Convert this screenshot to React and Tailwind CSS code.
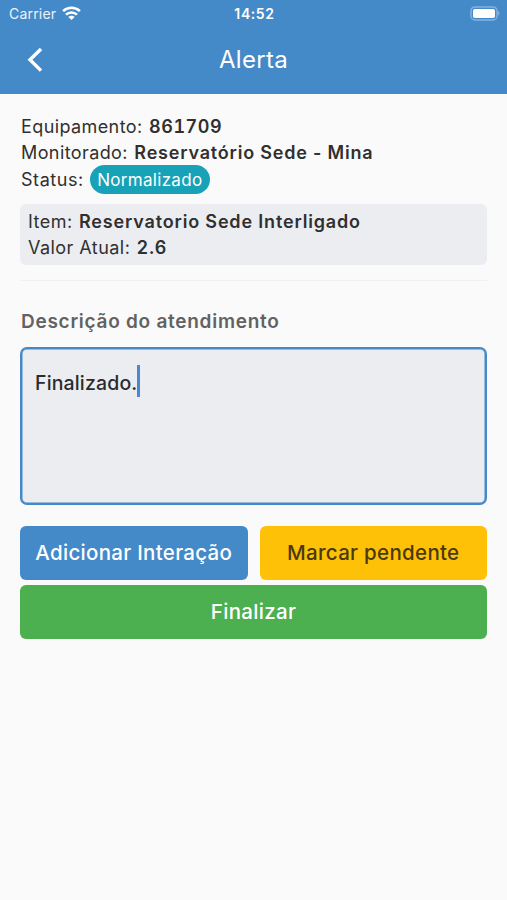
function BackIcon() {
  return (
    <svg width="18" height="26" viewBox="0 0 18 26" fill="none" stroke="white" strokeWidth="3.4">
      <path d="M15 2L4 12.8L15 23.6" />
    </svg>
  )
}

function WifiIcon() {
  return (
    <svg width="19" height="15" viewBox="0 0 19 15" fill="none" stroke="white" strokeWidth="2.6">
      <path d="M1.1 5.1C5.9 0.6 13.1 0.6 17.9 5.1" />
      <path d="M4 8.6C7.1 5.7 11.9 5.7 15 8.6" />
      <path d="M9.5 14L6.3 10.9C8 9.2 11 9.2 12.7 10.9Z" fill="white" stroke="none" />
    </svg>
  )
}

function BatteryIcon() {
  return (
    <svg width="30" height="15" viewBox="0 0 30 15" fill="none">
      <rect x="1" y="0.9" width="26" height="13" rx="4" stroke="white" strokeOpacity="0.35" strokeWidth="1.5" />
      <rect x="3" y="2.9" width="22" height="9" rx="1.6" fill="white" />
      <path d="M28.2 5C29.8 5.6 29.8 8.9 28.2 9.5Z" fill="white" fillOpacity="0.4" />
    </svg>
  )
}

function Field({ label, children }) {
  return (
    <div className="whitespace-nowrap">
      {label}: <span className="ml-[1px] font-semibold">{children}</span>
    </div>
  )
}

export default function App() {
  return (
    <div className="h-[900px] w-[507px] overflow-hidden bg-[#fafafa] font-['Inter',sans-serif] text-[#303030]">
      <header className="h-[94px] bg-[#4489c8] text-white">
        <div className="grid h-[27px] grid-cols-3 items-center pl-[9px] pr-[7px] text-[14px]">
          <div className="flex items-center gap-[6px]">
            <span className="tracking-[0.2px] text-white/90">Carrier</span>
            <WifiIcon />
          </div>
          <span className="text-center font-semibold tracking-[0.6px]">14:52</span>
          <div className="flex justify-end"><BatteryIcon /></div>
        </div>
        <div className="grid h-[66px] grid-cols-[70px_1fr_70px] items-center">
          <button className="pl-[26px]"><BackIcon /></button>
          <h1 className="text-center text-[24px] tracking-[0.3px]">Alerta</h1>
        </div>
      </header>

      <main className="px-[20px] pt-[20px]">
        <div className="pl-[1px] text-[18px] leading-[26px] tracking-[0.4px]">
          <Field label="Equipamento"><span className="tracking-[0.55px] tabular-nums">861709</span></Field>
          <Field label="Monitorado"><span className="tracking-[0.8px]">Reservatório Sede - Mina</span></Field>
          <div className="-mt-px flex h-[29px] items-center gap-[6px]">
            <span className="tracking-[0.55px]">Status:</span>
            <span className="flex h-[29px] items-center rounded-full bg-[#17a2b8] px-[7.5px] text-[17px] tracking-[0.3px] text-white">Normalizado</span>
          </div>
        </div>

        <div className="mt-[10px] h-[61px] rounded-[6px] bg-[#ecedf1] px-[8px] pt-[5px] text-[18px] leading-[26px] tracking-[0.45px]">
          <Field label="Item"><span className="tracking-[0.83px]">Reservatorio Sede Interligado</span></Field>
          <Field label="Valor Atual"><span className="tracking-[0.8px]">2.6</span></Field>
        </div>

        <hr className="mt-[15px] border-[#f1f1f1]" />

        <h2 className="mt-[28px] pl-[1px] text-[19px] leading-[26px] font-semibold tracking-[0.73px] text-[#626262]">Descrição do atendimento</h2>

        <div className="mt-[12px] flex h-[158px] items-start rounded-[7px] border-2 border-[#4489c8] bg-[#ecedf1] px-[13px] pt-[16px] text-[19.5px] leading-[36px] font-medium tracking-[0.15px] text-[#2b2b2b] shadow-[inset_0_0_0_0.5px_#4489c8]">
          Finalizado.
          <span className="h-[32px] w-[2.5px] bg-[#4b86d4]" />
        </div>

        <div className="mt-[21px] grid grid-cols-2 gap-x-[12px] gap-y-[5px] text-[20.5px] font-medium tracking-[0.3px]">
          <button className="h-[54px] rounded-[6px] bg-[#4489c8] text-white">Adicionar Interação</button>
          <button className="h-[54px] rounded-[6px] bg-[#ffc107] text-[#4a3a08]">Marcar pendente</button>
          <button className="col-span-2 h-[54px] rounded-[6px] bg-[#4caf50] text-white">Finalizar</button>
        </div>
      </main>
    </div>
  )
}
